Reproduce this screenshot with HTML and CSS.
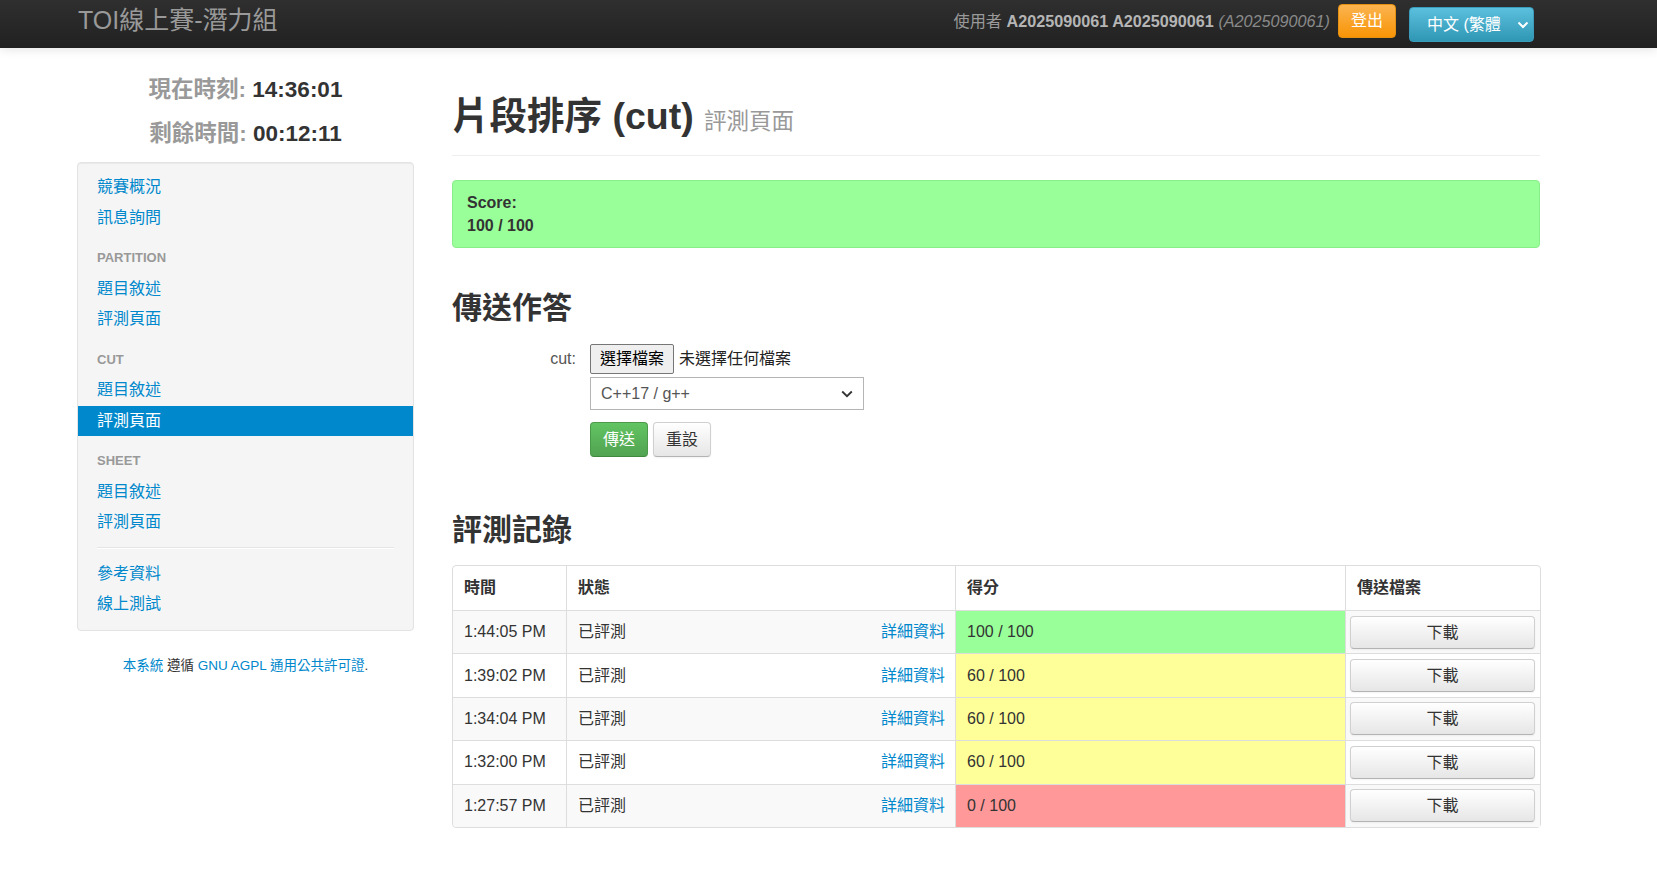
FILE: index.html
```html
<!DOCTYPE html>
<html lang="zh-Hant">
<head>
<meta charset="utf-8">
<title>TOI線上賽-潛力組</title>
<link rel="stylesheet" href="styles.css">
</head>
<body>
<header class="navbar">
  <div class="navbar-inner">
    <div class="brand">TOI線上賽-潛力組</div>
    <div class="nav-right">
      <div class="user">使用者 <b>A2025090061 A2025090061</b> <i>(A2025090061)</i></div>
      <div class="btn-logout">登出</div>
      <div class="lang-select">
        <span class="lang-text">中文 (繁體</span>
        <svg class="lang-chev" width="12" height="8" viewBox="0 0 12 8"><path d="M1.5 1.5 L6 6 L10.5 1.5" fill="none" stroke="#fff" stroke-width="2"/></svg>
      </div>
    </div>
  </div>
</header>

<div class="container">
  <aside class="sidebar">
    <div class="clock">
      <div class="clock-line"><span class="clock-label">現在時刻:</span> 14:36:01</div>
      <div class="clock-line"><span class="clock-label">剩餘時間:</span> 00:12:11</div>
    </div>
    <nav class="well">
      <a class="nav-item" href="#">競賽概況</a>
      <a class="nav-item" href="#">訊息詢問</a>
      <div class="nav-header">Partition</div>
      <a class="nav-item" href="#">題目敘述</a>
      <a class="nav-item" href="#">評測頁面</a>
      <div class="nav-header">Cut</div>
      <a class="nav-item" href="#">題目敘述</a>
      <a class="nav-item active" href="#">評測頁面</a>
      <div class="nav-header">Sheet</div>
      <a class="nav-item" href="#">題目敘述</a>
      <a class="nav-item" href="#">評測頁面</a>
      <div class="divider"></div>
      <a class="nav-item" href="#">參考資料</a>
      <a class="nav-item" href="#">線上測試</a>
    </nav>
    <p class="footer"><a href="#">本系統</a> 遵循 <a href="#">GNU AGPL 通用公共許可證</a>.</p>
  </aside>

  <main class="main">
    <div class="page-header">
      <h1>片段排序 (cut) <small>評測頁面</small></h1>
    </div>
    <div class="alert-score">
      <div>Score:</div>
      <div>100 / 100</div>
    </div>

    <h2 class="section-title first">傳送作答</h2>
    <div class="form">
      <div class="form-row">
        <span class="control-label">cut:</span>
        <span class="file-btn">選擇檔案</span>
        <span class="file-text">未選擇任何檔案</span>
      </div>
      <div class="controls">
        <div class="select">
          <span>C++17 / g++</span>
          <svg width="12" height="8" viewBox="0 0 12 8"><path d="M1.2 1.5 L6 6.2 L10.8 1.5" fill="none" stroke="#333" stroke-width="1.8"/></svg>
        </div>
        <div class="buttons">
          <span class="btn btn-success">傳送</span>
          <span class="btn btn-default">重設</span>
        </div>
      </div>
    </div>

    <h2 class="section-title second">評測記錄</h2>
    <table class="table">
      <colgroup>
        <col class="c1"><col class="c2"><col class="c3"><col class="c4">
      </colgroup>
      <thead>
        <tr><th>時間</th><th>狀態</th><th>得分</th><th>傳送檔案</th></tr>
      </thead>
      <tbody>
        <tr><td>1:44:05 PM</td><td>已評測<a class="details" href="#">詳細資料</a></td><td class="score score-full">100 / 100</td><td class="dl"><span class="btn-dl">下載</span></td></tr>
        <tr><td>1:39:02 PM</td><td>已評測<a class="details" href="#">詳細資料</a></td><td class="score score-part">60 / 100</td><td class="dl"><span class="btn-dl">下載</span></td></tr>
        <tr><td>1:34:04 PM</td><td>已評測<a class="details" href="#">詳細資料</a></td><td class="score score-part">60 / 100</td><td class="dl"><span class="btn-dl">下載</span></td></tr>
        <tr><td>1:32:00 PM</td><td>已評測<a class="details" href="#">詳細資料</a></td><td class="score score-part">60 / 100</td><td class="dl"><span class="btn-dl">下載</span></td></tr>
        <tr><td>1:27:57 PM</td><td>已評測<a class="details" href="#">詳細資料</a></td><td class="score score-zero">0 / 100</td><td class="dl"><span class="btn-dl">下載</span></td></tr>
      </tbody>
    </table>
  </main>
</div>
</body>
</html>
```

FILE: styles.css
```css
* { box-sizing: border-box; }

body {
  margin: 0;
  font-family: "Liberation Sans", "Noto Sans CJK TC", sans-serif;
  font-size: 16px;
  line-height: 20px;
  color: #333;
  background: #fff;
}

a { color: #0088cc; text-decoration: none; }

/* Navbar */
.navbar {
  height: 48px;
  background: linear-gradient(#2f2f2f, #212121);
  box-shadow: 0 1px 10px rgba(0, 0, 0, 0.12);
}
.navbar-inner {
  width: 1463px;
  margin-left: 77px;
  display: flex;
  justify-content: space-between;
  align-items: flex-start;
}
.brand {
  font-size: 25px;
  line-height: 40px;
  color: #999;
  padding-left: 1px;
}
.nav-right {
  display: flex;
  align-items: flex-start;
  padding-top: 4px;
  padding-right: 6px;
}
.user {
  font-size: 16.2px;
  line-height: 35px;
  color: #999;
}
.user b { color: #b5b5b5; }
.user i { color: #8a8a8a; }
.btn-logout {
  margin-left: 8px;
  height: 34px;
  padding: 0 12px;
  line-height: 32px;
  color: #fff;
  border: 1px solid #e59010;
  border-radius: 4px;
  background: linear-gradient(#fbb450, #f89406);
}
.lang-select {
  margin-left: 13px;
  margin-top: 3px;
  width: 125px;
  height: 35px;
  display: flex;
  align-items: center;
  justify-content: space-between;
  padding: 0 4px 0 17px;
  color: #fff;
  border: 1px solid #3a9cba;
  border-radius: 4px;
  background: linear-gradient(#5bc0de, #2f96b4);
  overflow: hidden;
}
.lang-text { white-space: nowrap; overflow: hidden; line-height: 33px; }

/* Layout */
.container {
  width: 1463px;
  margin-left: 77px;
  display: flex;
  gap: 38px;
  align-items: flex-start;
}
.sidebar { width: 337px; flex: none; }
.main { flex: 1; min-width: 0; }

/* Sidebar */
.clock { padding-top: 20px; }
.clock-line {
  font-size: 22.5px;
  font-weight: bold;
  line-height: 44px;
  text-align: center;
  color: #333;
}
.clock-label { color: #999; }

.well {
  margin-top: 6px;
  background: #f5f5f5;
  border: 1px solid #e3e3e3;
  border-radius: 4px;
  box-shadow: inset 0 1px 1px rgba(0, 0, 0, 0.05);
  padding: 9px 0 10px;
}
.nav-item {
  display: block;
  padding: 5px 19px;
  line-height: 20.5px;
  font-size: 16px;
}
.nav-item.active { background: #0088cc; color: #fff; }
.nav-header {
  margin-top: 10px;
  padding: 5px 19px;
  line-height: 20.5px;
  font-size: 13px;
  font-weight: bold;
  color: #999;
  text-transform: uppercase;
}
.divider {
  height: 1px;
  margin: 9px 19px 10px;
  background: #e5e5e5;
  border-bottom: 1px solid #fff;
  box-sizing: content-box;
}
.footer {
  margin: 25px 0 0;
  text-align: center;
  font-size: 13.5px;
  line-height: 20px;
}

/* Main */
.page-header {
  margin-top: 48px;
  padding-bottom: 18px;
  border-bottom: 1px solid #eee;
}
h1 {
  margin: 0;
  font-size: 37.5px;
  line-height: 41px;
  font-weight: bold;
}
h1 small {
  font-size: 22.5px;
  line-height: 1;
  font-weight: normal;
  color: #999;
}
.alert-score {
  margin-top: 24px;
  padding: 10px 14px 10px;
  background: #99ff99;
  border: 1px solid #88ee88;
  border-radius: 4px;
  font-weight: bold;
  line-height: 23px;
}
.section-title {
  margin: 41px 0 17px;
  font-size: 30px;
  line-height: 38px;
  font-weight: bold;
}
.section-title.second { margin: 54px 0 16px; }

.form-row { display: flex; align-items: center; }
.control-label {
  width: 124px;
  margin-right: 14px;
  text-align: right;
  color: #555;
}
.file-btn {
  height: 30px;
  padding: 0 9px;
  line-height: 28px;
  border: 1px solid #767676;
  border-radius: 2px;
  background: #efefef;
  color: #000;
}
.file-text { margin-left: 5px; color: #222; }
.controls { margin-left: 138px; }
.select {
  margin-top: 3px;
  width: 274px;
  height: 33px;
  display: flex;
  align-items: center;
  justify-content: space-between;
  padding: 0 10px;
  border: 1px solid #b5b5b5;
  background: #fff;
  color: #555;
}
.buttons { margin-top: 12px; display: flex; gap: 5px; }
.btn {
  height: 35px;
  padding: 0 12px;
  line-height: 33px;
  border: 1px solid;
  border-radius: 4px;
  font-size: 16px;
}
.btn-success {
  color: #fff;
  background: linear-gradient(#62c462, #51a351);
  border-color: #4a9a4a #4a9a4a #3d8a3d;
}
.btn-default {
  color: #333;
  background: linear-gradient(#fff, #e6e6e6);
  border-color: #d0d0d0 #d0d0d0 #b3b3b3;
  box-shadow: 0 1px 2px rgba(0, 0, 0, 0.05);
}

/* Table */
.table {
  width: 100%;
  table-layout: fixed;
  border-collapse: separate;
  border-spacing: 0;
  border: 1px solid #ddd;
  border-radius: 4px;
}
.c1 { width: 113px; }
.c2 { width: 389px; }
.c3 { width: 390px; }
.c4 { width: 195px; }
.table th, .table td {
  padding: 0 10px 0 11px;
  text-align: left;
  vertical-align: middle;
  border-left: 1px solid #ddd;
}
.table th:first-child, .table td:first-child { border-left: 0; }
.table th { height: 44px; font-weight: bold; }
.table td { height: 43.4px; border-top: 1px solid #ddd; }
.table tbody tr:nth-child(odd) td { background: #f9f9f9; }
.table tbody tr:last-child td:first-child { border-bottom-left-radius: 4px; }
.table tbody tr td.score-full { background: #99ff99; }
.table tbody tr td.score-part { background: #ffff99; }
.table tbody tr td.score-zero { background: #ff9999; }
.details { float: right; }
.table td.dl { padding: 0 5px 0 4px; }
.btn-dl {
  display: block;
  height: 33px;
  line-height: 31px;
  text-align: center;
  color: #333;
  border: 1px solid #d0d0d0;
  border-bottom-color: #b3b3b3;
  border-radius: 4px;
  background: linear-gradient(#fff, #e6e6e6);
  box-shadow: 0 1px 2px rgba(0, 0, 0, 0.05);
}
```
